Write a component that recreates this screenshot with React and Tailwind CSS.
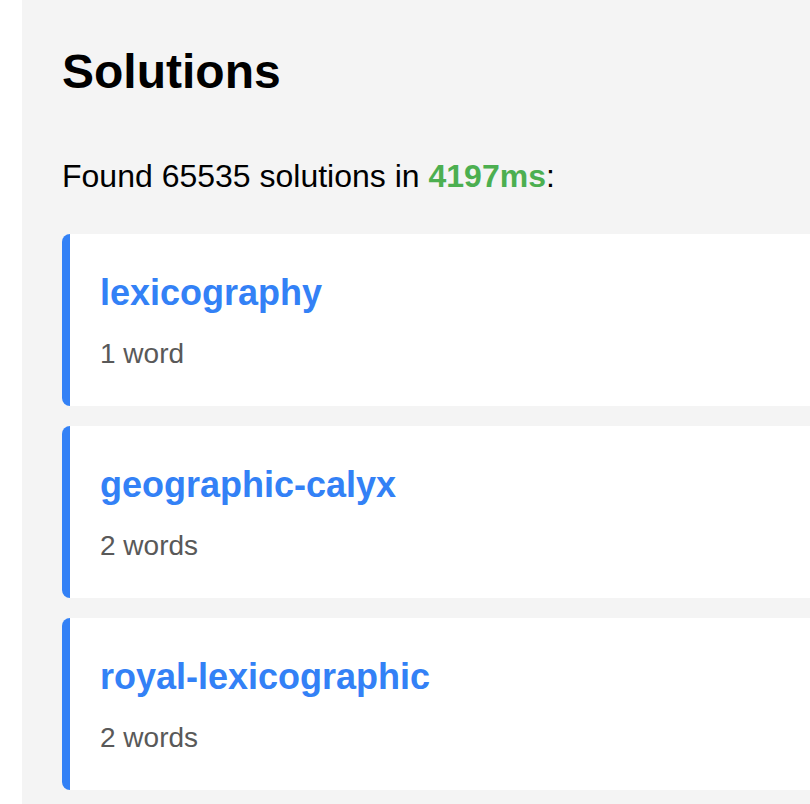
import React from 'react';

const solutions = [
  { name: 'lexicography', words: 1 },
  { name: 'geographic-calyx', words: 2 },
  { name: 'royal-lexicographic', words: 2 },
];

const App = () => {
  return (
    <div className="h-[804px] w-[810px] overflow-hidden bg-white pl-[22px] font-['Liberation_Sans',Arial,sans-serif]">
      <div className="min-h-full w-[1000px] bg-[#f4f4f4] px-[40px] pt-[44px]">
        <h1 className="text-[48px] leading-[55px] font-bold text-black">Solutions</h1>

        <p className="mt-[59px] text-[32px] leading-[37px] text-black">
          Found 65535 solutions in <span className="font-bold text-[#4caf50]">4197ms</span>:
        </p>

        <div className="mt-[39px] flex flex-col gap-[20px]">
          {solutions.map((item) => (
            <div
              key={item.name}
              className="h-[172px] rounded-[8px] border-l-[8px] border-[#3381f6] bg-white pl-[30px] pt-[38px]"
            >
              <h3 className="text-[36px] leading-[41px] font-bold text-[#3381f6]">{item.name}</h3>
              <p className="mt-[25px] text-[28px] leading-[32px] text-[#595959]">
                {item.words} {item.words === 1 ? 'word' : 'words'}
              </p>
            </div>
          ))}
        </div>
      </div>
    </div>
  );
};

export default App;
